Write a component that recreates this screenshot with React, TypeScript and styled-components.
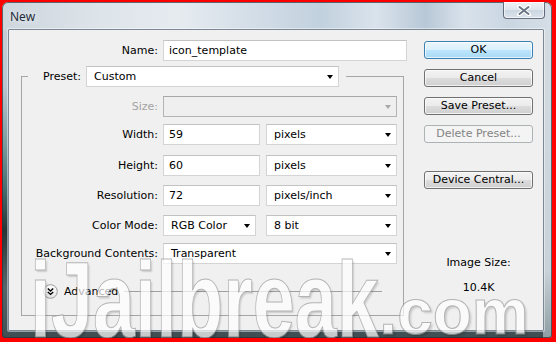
import styled, { createGlobalStyle } from "styled-components";

const GlobalStyle = createGlobalStyle`
  html, body {
    margin: 0;
    padding: 0;
  }
  body {
    font-family: "DejaVu Sans", Tahoma, sans-serif;
    font-size: 11px;
    color: #000;
  }
`;

const Screen = styled.div`
  width: 556px;
  height: 342px;
  box-sizing: border-box;
  padding: 2px 4px 4px 2px;
  background: #f00;
  overflow: hidden;
`;

const Window = styled.div`
  position: relative;
  height: 100%;
  display: flex;
  flex-direction: column;
  overflow: hidden;
  border-radius: 6px 6px 3px 3px;
  box-shadow: inset 0 0 0 1px rgba(40, 50, 60, 0.7);
  background:
    linear-gradient(90deg, #cdd5dd 0%, #dde4ea 18%, #e6ebf0 32%, #d0dbe6 48%, #c2d1de 58%, #dae3ec 68%, #b8c8d7 77%, #d9e2eb 84%, #c9d6e2 92%, #d6dee6 100%) top / 100% 28px no-repeat,
    linear-gradient(180deg, #d5dde3 0%, #c8d2d8 80%, #8f9ea4 100%) right / 9px 100% no-repeat,
    linear-gradient(180deg, #c9d2da 0%, #b9c6d0 25%, #7c9ca0 42%, #4a7074 55%, #263436 68%, #55666b 85%, #3f4e52 100%);
`;

const TitleBar = styled.div`
  flex: none;
  height: 27px;
  display: flex;
  align-items: flex-start;
  padding-left: 8px;
`;

const Title = styled.span`
  padding-top: 7px;
  font-family: "Noto Sans", "DejaVu Sans", sans-serif;
  font-size: 12px;
  line-height: 16px;
  color: #1d2b3a;
  text-shadow: 0 0 6px rgba(255, 255, 255, 0.9);
`;

const CloseButton = styled.div`
  margin-left: auto;
  margin-right: 7px;
  width: 42px;
  height: 17px;
  box-sizing: border-box;
  display: flex;
  align-items: center;
  justify-content: center;
  border: 1px solid rgba(60, 70, 85, 0.75);
  border-top: none;
  border-radius: 0 0 4px 4px;
  background: linear-gradient(#eef2f6 0%, #dfe6ed 50%, #cbd6e0 50%, #dbe3eb 100%);
  box-shadow: inset 0 0 0 1px rgba(255, 255, 255, 0.6);
`;

const Body = styled.div`
  flex: 1;
  margin: 0 8px 7px 6px;
  border: 1px solid #7c8895;
  border-radius: 1px;
  background: #f0f0f0;
  display: grid;
  grid-template-columns: 398px 109px;
  column-gap: 17px;
  align-items: start;
  padding-top: 10px;
  box-shadow: 0 0 0 1px rgba(255, 255, 255, 0.45);
`;

const FormColumn = styled.div`
  display: flex;
  flex-direction: column;
`;

const NameRow = styled.div`
  display: grid;
  grid-template-columns: 149px 244px;
  column-gap: 5px;
  align-items: center;
`;

const Label = styled.label<{ $disabled?: boolean }>`
  text-align: right;
  white-space: nowrap;
  color: ${(p) => (p.$disabled ? "#a3a3a3" : "#000")};
`;

const TextBox = styled.input<{ $w?: number }>`
  box-sizing: border-box;
  width: ${(p) => (p.$w ? `${p.$w}px` : "100%")};
  height: 21px;
  margin: 0;
  padding: 0 5px;
  border: 1px solid #d4d4d4;
  border-top-color: #c2c2c2;
  background: #fff;
  font: 11px "DejaVu Sans", Tahoma, sans-serif;
  color: #000;
  outline: none;
`;

const Select = styled.div<{ $w?: number; $disabled?: boolean }>`
  box-sizing: border-box;
  width: ${(p) => (p.$w ? `${p.$w}px` : "100%")};
  height: 21px;
  display: flex;
  align-items: center;
  justify-content: space-between;
  padding: 0 5px 0 7px;
  border: 1px solid ${(p) => (p.$disabled ? "#b4b4b4" : "#d4d4d4")};
  border-top-color: ${(p) => (p.$disabled ? "#a8a8a8" : "#c2c2c2")};
  background: ${(p) => (p.$disabled ? "#efefef" : "#fff")};
  white-space: nowrap;
`;

const Arrow = styled.span<{ $disabled?: boolean }>`
  width: 0;
  height: 0;
  border-left: 3.5px solid transparent;
  border-right: 3.5px solid transparent;
  border-top: 4px solid ${(p) => (p.$disabled ? "#a8a8a8" : "#000")};
`;

const Group = styled.fieldset`
  margin: 5px 3px 0 12px;
  padding: 0 6px 17px 0;
  border: 1px solid #a6a6a6;
  min-width: 0;
`;

const GroupHead = styled.legend`
  margin-left: 6px;
  padding: 0 7px 0 15px;
`;

const HeadInner = styled.div`
  display: flex;
  align-items: center;
  gap: 5px;
`;

const Row = styled.div<{ $gap: number }>`
  display: grid;
  grid-template-columns: 136px 234px;
  column-gap: 5px;
  align-items: center;
  margin-top: ${(p) => p.$gap}px;
`;

const Pair = styled.div`
  display: flex;
  justify-content: space-between;
`;

const AdvancedRow = styled.div`
  display: flex;
  align-items: center;
  height: 14px;
  margin-top: 20px;
  padding: 0 15px 0 21px;
  gap: 6px;
`;

const Rule = styled.div`
  flex: 1;
  height: 1px;
  background: #a0a0a0;
`;

const ButtonColumn = styled.div`
  display: flex;
  flex-direction: column;
  margin-top: 1px;
`;

const Button = styled.button<{ $primary?: boolean; $gap?: number }>`
  box-sizing: border-box;
  width: 100%;
  height: 18px;
  margin: ${(p) => p.$gap ?? 0}px 0 0;
  padding: 0;
  font: 11px/16px "DejaVu Sans", Tahoma, sans-serif;
  color: #000;
  border: 1px solid ${(p) => (p.$primary ? "#3c7fb1" : "#707070")};
  border-radius: 3px;
  background: ${(p) =>
    p.$primary
      ? "linear-gradient(#eaf6fd 0%, #d9f0fc 50%, #bee6fd 50%, #a7d9f5 100%)"
      : "linear-gradient(#f2f2f2 0%, #ebebeb 50%, #dddddd 50%, #cfcfcf 100%)"};
  box-shadow: inset 0 0 0 1px rgba(255, 255, 255, 0.7);

  &:disabled {
    color: #838383;
    border-color: #adb2b5;
    background: #f4f4f4;
    box-shadow: none;
  }
`;

const Info = styled.div<{ $gap: number }>`
  margin-top: ${(p) => p.$gap}px;
  text-align: center;
  line-height: 13px;
`;

const Watermark = styled.div`
  position: absolute;
  left: 28px;
  top: 244px;
  white-space: nowrap;
  pointer-events: none;
  font-family: "Liberation Sans", Arial, sans-serif;
  font-weight: bold;
  color: #fff;
  opacity: 0.7;
  -webkit-text-stroke: 1px #9a9a9a;
  text-shadow: 2px 2px 2px rgba(0, 0, 0, 0.22);
`;

const Big = styled.span`
  display: inline-block;
  font-size: 108px;
  line-height: 108px;
  transform: scaleX(0.7);
  transform-origin: left bottom;
  margin-right: -149px;
`;

const Small = styled.span`
  font-size: 64px;
  vertical-align: 3px;
`;

function CloseGlyph() {
  return (
    <svg width="14" height="11" viewBox="0 0 14 11">
      <path d="M2 1.5 L12 9.5 M12 1.5 L2 9.5" stroke="#fff" strokeWidth="4" strokeLinecap="round" />
      <path d="M2.5 2 L11.5 9 M11.5 2 L2.5 9" stroke="#6a7683" strokeWidth="2" strokeLinecap="round" />
    </svg>
  );
}

function ExpandGlyph() {
  return (
    <svg width="15" height="15" viewBox="0 0 15 15">
      <defs>
        <linearGradient id="exp" x1="0" y1="0" x2="0" y2="1">
          <stop offset="0" stopColor="#ffffff" />
          <stop offset="1" stopColor="#e2e2e2" />
        </linearGradient>
      </defs>
      <circle cx="7.5" cy="7.5" r="6.8" fill="url(#exp)" stroke="#9a9a9a" />
      <path d="M4.8 4.6 L7.5 7.1 L10.2 4.6 M4.8 7.9 L7.5 10.4 L10.2 7.9" fill="none" stroke="#000" strokeWidth="1.3" />
    </svg>
  );
}

export default function App() {
  return (
    <>
      <GlobalStyle />
      <Screen>
        <Window>
          <TitleBar>
            <Title>New</Title>
            <CloseButton>
              <CloseGlyph />
            </CloseButton>
          </TitleBar>
          <Body>
            <FormColumn>
              <NameRow>
                <Label>Name:</Label>
                <TextBox defaultValue="icon_template" />
              </NameRow>
              <Group>
                <GroupHead>
                  <HeadInner>
                    <Label>Preset:</Label>
                    <Select $w={253}>
                      Custom
                      <Arrow />
                    </Select>
                  </HeadInner>
                </GroupHead>
                <Row $gap={9}>
                  <Label $disabled>Size:</Label>
                  <Select $disabled>
                    <span />
                    <Arrow $disabled />
                  </Select>
                </Row>
                <Row $gap={7}>
                  <Label>Width:</Label>
                  <Pair>
                    <TextBox $w={97} defaultValue="59" />
                    <Select $w={131}>
                      pixels
                      <Arrow />
                    </Select>
                  </Pair>
                </Row>
                <Row $gap={10}>
                  <Label>Height:</Label>
                  <Pair>
                    <TextBox $w={97} defaultValue="60" />
                    <Select $w={131}>
                      pixels
                      <Arrow />
                    </Select>
                  </Pair>
                </Row>
                <Row $gap={9}>
                  <Label>Resolution:</Label>
                  <Pair>
                    <TextBox $w={97} defaultValue="72" />
                    <Select $w={131}>
                      pixels/inch
                      <Arrow />
                    </Select>
                  </Pair>
                </Row>
                <Row $gap={9}>
                  <Label>Color Mode:</Label>
                  <Pair>
                    <Select $w={93}>
                      RGB Color
                      <Arrow />
                    </Select>
                    <Select $w={131}>
                      8 bit
                      <Arrow />
                    </Select>
                  </Pair>
                </Row>
                <Row $gap={7}>
                  <Label>Background Contents:</Label>
                  <Select>
                    Transparent
                    <Arrow />
                  </Select>
                </Row>
                <AdvancedRow>
                  <ExpandGlyph />
                  <span>Advanced</span>
                  <Rule />
                </AdvancedRow>
              </Group>
            </FormColumn>
            <ButtonColumn>
              <Button $primary>OK</Button>
              <Button $gap={10}>Cancel</Button>
              <Button $gap={10}>Save Preset...</Button>
              <Button $gap={10} disabled>
                Delete Preset...
              </Button>
              <Button $gap={28}>Device Central...</Button>
              <Info $gap={67}>Image Size:</Info>
              <Info $gap={12}>10.4K</Info>
            </ButtonColumn>
          </Body>
          <Watermark>
            <Big>iJailbreak</Big>
            <Small>.com</Small>
          </Watermark>
        </Window>
      </Screen>
    </>
  );
}
